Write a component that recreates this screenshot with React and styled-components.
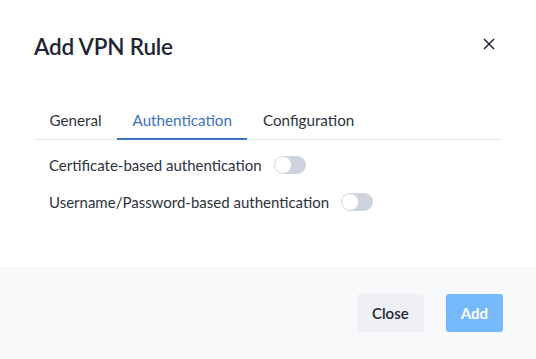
import { useState } from "react";
import styled, { createGlobalStyle } from "styled-components";

const GlobalStyle = createGlobalStyle`
  html, body {
    margin: 0;
    padding: 0;
    background: #ffffff;
    font-family: Lato, "Noto Sans", sans-serif;
  }
  * {
    box-sizing: border-box;
  }
`;

const Modal = styled.div`
  width: 536px;
  height: 359px;
  display: flex;
  flex-direction: column;
  background: #ffffff;
`;

const Header = styled.div`
  display: flex;
  align-items: flex-start;
  justify-content: space-between;
  padding: 33px 40px 0 34px;
  height: 100px;
`;

const Title = styled.h2`
  margin: 0;
  font-size: 22.5px;
  font-weight: 600;
  line-height: 28px;
  color: #1d2433;
  letter-spacing: -0.2px;
`;

const CloseX = styled.button`
  border: 0;
  background: transparent;
  padding: 0;
  margin-top: 4px;
  width: 14px;
  height: 14px;
  cursor: pointer;
  color: #1d2433;
`;

const Body = styled.div`
  flex: 1;
  padding: 0 36px 0 34px;
`;

const Tabs = styled.div`
  display: flex;
  border-bottom: 1px solid #e3e6eb;
`;

const Tab = styled.button`
  border: 0;
  background: transparent;
  font-family: inherit;
  font-size: 15.2px;
  padding: 11px 15.5px 9px;
  margin-bottom: -1px;
  color: ${(p) => (p.$active ? "#3b72c2" : "#2c3340")};
  border-bottom: 2px solid ${(p) => (p.$active ? "#3b72c2" : "transparent")};
  cursor: pointer;
`;

const Options = styled.div`
  display: flex;
  flex-direction: column;
  gap: 19px;
  padding: 16px 15px 0;
`;

const Row = styled.label`
  display: flex;
  align-items: center;
  gap: 12px;
  font-size: 15px;
  color: #2c3340;
  height: 18px;
`;

const Track = styled.span`
  position: relative;
  width: 32px;
  height: 18px;
  border-radius: 9px;
  background: ${(p) => (p.$on ? "#3b72c2" : "#cdd4de")};
  cursor: pointer;
`;

const Knob = styled.span`
  position: absolute;
  top: 1px;
  left: ${(p) => (p.$on ? "15px" : "1px")};
  width: 16px;
  height: 16px;
  border-radius: 50%;
  background: #ffffff;
  box-shadow: 0 0 0 0.5px #d8dde4;
`;

const Footer = styled.div`
  height: 93px;
  background: #f8f9fb;
  display: flex;
  justify-content: flex-end;
  align-items: center;
  gap: 22px;
  padding: 0 33px 0 0;
`;

const Button = styled.button`
  height: 38px;
  padding: 0 15px;
  border: 0;
  border-radius: 3px;
  font-family: inherit;
  font-size: 15px;
  font-weight: ${(p) => (p.$primary ? 700 : 600)};
  background: ${(p) => (p.$primary ? "#75b9fc" : "#eef0f4")};
  color: ${(p) => (p.$primary ? "#ffffff" : "#1d2433")};
  cursor: pointer;
`;

const Toggle = ({ label }) => {
  const [on, setOn] = useState(false);
  return (
    <Row>
      {label}
      <Track $on={on} onClick={() => setOn(!on)}>
        <Knob $on={on} />
      </Track>
    </Row>
  );
};

export default function App() {
  const [tab, setTab] = useState("Authentication");
  const tabs = ["General", "Authentication", "Configuration"];
  return (
    <>
      <GlobalStyle />
      <Modal>
        <Header>
          <Title>Add VPN Rule</Title>
          <CloseX aria-label="close">
            <svg width="14" height="14" viewBox="0 0 14 14">
              <path d="M2 2L12 12M12 2L2 12" stroke="currentColor" strokeWidth="1.5" />
            </svg>
          </CloseX>
        </Header>
        <Body>
          <Tabs>
            {tabs.map((t) => (
              <Tab key={t} $active={tab === t} onClick={() => setTab(t)}>
                {t}
              </Tab>
            ))}
          </Tabs>
          <Options>
            <Toggle label="Certificate-based authentication" />
            <Toggle label="Username/Password-based authentication" />
          </Options>
        </Body>
        <Footer>
          <Button>Close</Button>
          <Button $primary>Add</Button>
        </Footer>
      </Modal>
    </>
  );
}
